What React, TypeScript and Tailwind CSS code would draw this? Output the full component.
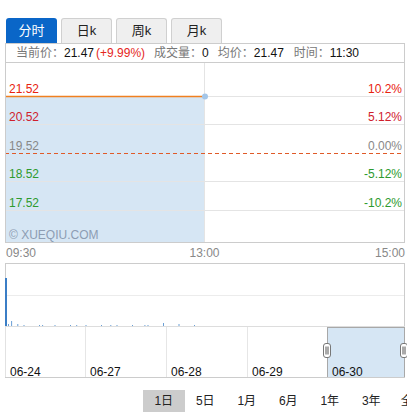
import React from "react";

const FONT = '"Liberation Sans", Arial, "Noto Sans CJK SC", sans-serif';

const TABS = ["分时", "日k", "周k", "月k"];
const RANGES = ["1日", "5日", "1月", "6月", "1年", "3年", "全部"];

const PRICE_ROWS = [
  { y: 33, left: "21.52", right: "10.2%", color: "#e8220f" },
  { y: 61, left: "20.52", right: "5.12%", color: "#d0202c" },
  { y: 90, left: "19.52", right: "0.00%", color: "#888888", dashed: true },
  { y: 118, left: "18.52", right: "-5.12%", color: "#2e9a2e" },
  { y: 147, left: "17.52", right: "-10.2%", color: "#2e9a2e" },
];

const DATES = [
  { x: 0, label: "06-24" },
  { x: 80, label: "06-27" },
  { x: 161, label: "06-28" },
  { x: 242, label: "06-29" },
  { x: 322, label: "06-30" },
];

// small volume bars after the open
const BARS = Array.from({ length: 64 }, (_, i) => {
  const x = 1 + i * 3.1;
  let h = ((i * 7) % 5 === 0 ? 2 : 1) + ((i * 13) % 11 === 0 ? 1 : 0);
  if (i === 1) h = 6;
  if (i === 3) h = 3;
  if (i === 50) h = 4;
  return { x, h };
});

function PriceChart() {
  return (
    <svg width={400} height={180} className="block" style={{ fontFamily: FONT }}>
      <rect x={0} y={33} width={199} height={147} fill="#d6e6f4" />
      {PRICE_ROWS.map((r) =>
        r.dashed ? null : (
          <line key={r.y} x1={0} x2={399} y1={r.y + 0.5} y2={r.y + 0.5} stroke="#e4e4e4" />
        )
      )}
      <line x1={199.5} x2={199.5} y1={0} y2={180} stroke="#e4e4e4" />
      <line x1={0} x2={400} y1={90.5} y2={90.5} stroke="#e05a28" strokeDasharray="4 3" />
      <line x1={0} x2={199} y1={33.5} y2={33.5} stroke="#f08020" strokeWidth={1.5} />
      <circle cx={200} cy={33.5} r={3} fill="#a4c6e8" />
      <line x1={0.5} x2={0.5} y1={0} y2={180} stroke="#cccccc" />
      <line x1={399.5} x2={399.5} y1={0} y2={180} stroke="#cccccc" />
      <line x1={0} x2={400} y1={179.5} y2={179.5} stroke="#cccccc" />
      {PRICE_ROWS.map((r) => (
        <g key={r.left} fontSize={12} fill={r.color}>
          <text x={4} y={r.y - 3}>{r.left}</text>
          <text x={397} y={r.y - 3} textAnchor="end">{r.right}</text>
        </g>
      ))}
      <text x={4} y={176} fontSize={12} fill="#8d9db3">© XUEQIU.COM</text>
    </svg>
  );
}

function VolumeChart() {
  return (
    <svg width={400} height={64} className="block">
      <line x1={0} x2={400} y1={0.5} y2={0.5} stroke="#cccccc" />
      <line x1={0} x2={400} y1={32.5} y2={32.5} stroke="#ececec" />
      <line x1={0.5} x2={0.5} y1={0} y2={64} stroke="#cccccc" />
      <line x1={399.5} x2={399.5} y1={0} y2={64} stroke="#cccccc" />
      <rect x={0} y={15} width={2} height={49} fill="#3b7ec6" />
      {BARS.map((b, i) => (
        <rect key={i} x={b.x + 2} y={64 - b.h} width={1} height={b.h} fill="#6a9fd6" />
      ))}
      <line x1={0} x2={400} y1={63.5} y2={63.5} stroke="#dddddd" />
    </svg>
  );
}

function Handle({ x }: { x: number }) {
  return (
    <g>
      <rect x={x - 3.5} y={16.5} width={7} height={14} rx={2.5} fill="#ffffff" stroke="#777777" />
      <line x1={x - 1} x2={x - 1} y1={19.5} y2={27.5} stroke="#555555" />
      <line x1={x + 1} x2={x + 1} y1={19.5} y2={27.5} stroke="#555555" />
    </g>
  );
}

function Navigator() {
  return (
    <svg width={402} height={51} className="block overflow-visible" style={{ fontFamily: FONT }}>
      <line x1={0.5} x2={0.5} y1={0} y2={51} stroke="#e2e2e2" />
      {DATES.slice(1).map((d) => (
        <line key={d.x} x1={d.x + 0.5} x2={d.x + 0.5} y1={0} y2={51} stroke="#e6e6e6" />
      ))}
      <rect x={322.5} y={0.5} width={77} height={50} fill="#d6e6f4" stroke="#a8a8a8" />
      <line x1={0} x2={400} y1={50.5} y2={50.5} stroke="#cccccc" />
      {DATES.map((d) => (
        <text key={d.label} x={d.x + 5} y={49} fontSize={12} fill="#111111">
          {d.label}
        </text>
      ))}
      <Handle x={322} />
      <Handle x={399} />
    </svg>
  );
}

export default function App() {
  return (
    <div
      className="w-[407px] h-[418px] bg-white overflow-hidden pt-[18px]"
      style={{ fontFamily: FONT }}
    >
      {/* Tabs */}
      <div className="flex gap-[4px] pl-[6px]">
        {TABS.map((t, i) => (
          <div
            key={t}
            className={
              i === 0
                ? "w-[51px] h-[25px] flex items-center justify-center rounded-t-[3px] bg-[#0a66c8] text-white text-[13px]"
                : "w-[51px] h-[25px] flex items-center justify-center rounded-t-[3px] bg-[#efefef] border border-b-0 border-[#d0d0d0] text-[#222] text-[13px]"
            }
          >
            {t}
          </div>
        ))}
      </div>

      {/* Quote bar */}
      <div className="ml-[5px] w-[400px] h-[20px] border border-[#cccccc] flex items-center pl-[10px] text-[12px] leading-none whitespace-nowrap">
        <span className="text-[#777]">当前价：</span>
        <span className="text-[#111]">21.47</span>
        <span className="text-[#e5261c] ml-[2px]">(+9.99%)</span>
        <span className="text-[#777] ml-[9px]">成交量：</span>
        <span className="text-[#111]">0</span>
        <span className="text-[#777] ml-[9px]">均价：</span>
        <span className="text-[#111]">21.47</span>
        <span className="text-[#777] ml-[10px]">时间：</span>
        <span className="text-[#111]">11:30</span>
      </div>

      {/* Price chart */}
      <div className="ml-[5px]">
        <PriceChart />
      </div>

      {/* Time axis */}
      <div className="ml-[5px] w-[400px] h-[20px] flex items-center justify-between text-[12px] text-[#888] pl-[1px]">
        <span>09:30</span>
        <span className="-translate-x-[1px]">13:00</span>
        <span>15:00</span>
      </div>

      {/* Volume */}
      <div className="ml-[5px]">
        <VolumeChart />
      </div>

      {/* Navigator */}
      <div className="ml-[5px]">
        <Navigator />
      </div>

      {/* Range buttons */}
      <div className="flex pl-[143px] mt-[12px] whitespace-nowrap">
        {RANGES.map((r, i) => (
          <div
            key={r}
            className={
              i === 0
                ? "w-[41.5px] h-[22px] shrink-0 flex items-center justify-center bg-[#cccccc] text-[12px] text-[#222]"
                : "w-[41.5px] h-[22px] shrink-0 flex items-center justify-center text-[12px] text-[#222]"
            }
          >
            {r}
          </div>
        ))}
      </div>
    </div>
  );
}
